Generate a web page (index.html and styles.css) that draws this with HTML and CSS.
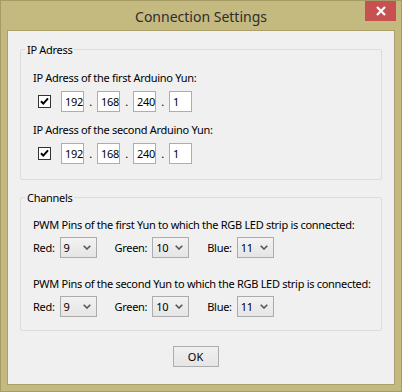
FILE: index.html
```html
<!DOCTYPE html>
<html lang="en">
<head>
  <meta charset="UTF-8">
  <meta name="viewport" content="width=device-width, initial-scale=1.0">
  <title>Connection Settings</title>
  <link rel="stylesheet" href="styles.css">
</head>
<body>
  <div class="window">
    <div class="titlebar">
      <span class="title">Connection Settings</span>
      <button class="close" aria-label="Close">
        <svg width="10" height="10" viewBox="0 0 10 10">
          <path d="M1 1L9 9M9 1L1 9" stroke="#fff" stroke-width="2.2" />
        </svg>
      </button>
    </div>

    <div class="content">
      <fieldset class="group group-ip">
        <legend>IP Adress</legend>

        <div class="field-label first">IP Adress of the first Arduino Yun:</div>
        <div class="ip-row">
          <span class="checkbox">
            <svg width="13" height="13" viewBox="0 0 13 13">
              <rect x="0.5" y="0.5" width="12" height="12" fill="#fff" stroke="#333" />
              <path d="M3 6.2L5.3 8.6L10 3.4" fill="none" stroke="#000" stroke-width="2" />
            </svg>
          </span>
          <span class="octet">192</span><span class="dot">.</span>
          <span class="octet">168</span><span class="dot">.</span>
          <span class="octet">240</span><span class="dot">.</span>
          <span class="octet">1</span>
        </div>

        <div class="field-label">IP Adress of the second Arduino Yun:</div>
        <div class="ip-row">
          <span class="checkbox">
            <svg width="13" height="13" viewBox="0 0 13 13">
              <rect x="0.5" y="0.5" width="12" height="12" fill="#fff" stroke="#333" />
              <path d="M3 6.2L5.3 8.6L10 3.4" fill="none" stroke="#000" stroke-width="2" />
            </svg>
          </span>
          <span class="octet">192</span><span class="dot">.</span>
          <span class="octet">168</span><span class="dot">.</span>
          <span class="octet">240</span><span class="dot">.</span>
          <span class="octet">1</span>
        </div>
      </fieldset>

      <fieldset class="group group-channels">
        <legend>Channels</legend>

        <div class="field-label first">PWM Pins of the first Yun to which the RGB LED strip is connected:</div>
        <div class="pin-row">
          <span class="pin-label">Red:</span>
          <span class="combo"><span>9</span><svg width="8" height="5" viewBox="0 0 8 5"><path d="M0.7 0.7L4 4L7.3 0.7" fill="none" stroke="#555" stroke-width="1.6" /></svg></span>
          <span class="pin-label">Green:</span>
          <span class="combo"><span>10</span><svg width="8" height="5" viewBox="0 0 8 5"><path d="M0.7 0.7L4 4L7.3 0.7" fill="none" stroke="#555" stroke-width="1.6" /></svg></span>
          <span class="pin-label">Blue:</span>
          <span class="combo"><span>11</span><svg width="8" height="5" viewBox="0 0 8 5"><path d="M0.7 0.7L4 4L7.3 0.7" fill="none" stroke="#555" stroke-width="1.6" /></svg></span>
        </div>

        <div class="field-label second">PWM Pins of the second Yun to which the RGB LED strip is connected:</div>
        <div class="pin-row">
          <span class="pin-label">Red:</span>
          <span class="combo"><span>9</span><svg width="8" height="5" viewBox="0 0 8 5"><path d="M0.7 0.7L4 4L7.3 0.7" fill="none" stroke="#555" stroke-width="1.6" /></svg></span>
          <span class="pin-label">Green:</span>
          <span class="combo"><span>10</span><svg width="8" height="5" viewBox="0 0 8 5"><path d="M0.7 0.7L4 4L7.3 0.7" fill="none" stroke="#555" stroke-width="1.6" /></svg></span>
          <span class="pin-label">Blue:</span>
          <span class="combo"><span>11</span><svg width="8" height="5" viewBox="0 0 8 5"><path d="M0.7 0.7L4 4L7.3 0.7" fill="none" stroke="#555" stroke-width="1.6" /></svg></span>
        </div>
      </fieldset>

      <div class="actions">
        <button class="ok">OK</button>
      </div>
    </div>
  </div>
</body>
</html>
```

FILE: styles.css
```css
/* Base */
body, html {
  margin: 0;
  padding: 0;
  font-family: "Noto Sans", "Open Sans", Arial, sans-serif;
  font-size: 11px;
  color: #000;
}

/* Window frame */
.window {
  width: 400px;
  height: 390px;
  background-color: #c4b97f;
  border: 1px solid #a59b66;
  display: flex;
  flex-direction: column;
}

.titlebar {
  height: 29px;
  position: relative;
  display: flex;
  align-items: center;
  justify-content: center;
}

.title {
  font-size: 14px;
  color: #2e2e2e;
  margin-top: 2px;
}

.close {
  position: absolute;
  top: 0;
  right: 5px;
  width: 31px;
  height: 20px;
  padding: 0;
  border: none;
  background-color: #c75050;
  display: flex;
  align-items: center;
  justify-content: center;
}

/* Client area */
.content {
  flex: 1;
  margin: 0 6px 6px;
  background-color: #f0f0f0;
  border: 1px solid #aaa06b;
  padding: 11px 12px 0;
  letter-spacing: -0.3px;
}

/* Group boxes */
.group {
  margin: 0;
  border: 1px solid #dcdcdc;
  border-radius: 2px;
  padding: 0 4px 15px;
}

.group legend {
  padding: 0 2px;
  line-height: 15px;
}

.group-channels {
  margin-top: 10px;
  padding-bottom: 13px;
}

.field-label {
  line-height: 15px;
  white-space: nowrap;
  margin: 10px 0 6px 8px;
}

.field-label.first {
  margin-top: 13px;
}

.group-channels .field-label {
  margin-bottom: 5px;
}

.group-channels .field-label.first {
  margin-top: 12px;
}

.group-channels .field-label.second {
  margin-top: 18px;
}

/* IP rows */
.ip-row {
  display: flex;
  align-items: center;
  height: 21px;
  margin-left: 13px;
}

.checkbox {
  display: flex;
  width: 13px;
  height: 13px;
  margin-right: 10px;
}

.octet {
  box-sizing: border-box;
  width: 23px;
  height: 21px;
  border: 1px solid #abadb3;
  background-color: #fff;
  padding: 0 3px;
  line-height: 19px;
}

.dot {
  width: 13px;
  text-align: center;
  line-height: 19px;
}

/* Pin rows */
.pin-row {
  display: flex;
  align-items: center;
  height: 21px;
  margin-left: 8px;
}

.pin-label {
  margin-right: 5px;
  margin-left: 18px;
}

.pin-label:first-child {
  margin-left: 0;
}

.combo {
  box-sizing: border-box;
  width: 37px;
  height: 21px;
  border: 1px solid #acacac;
  background: linear-gradient(#f2f2f2, #e5e5e5);
  display: flex;
  align-items: center;
  justify-content: space-between;
  padding: 0 5px 0 3px;
}

/* Footer */
.actions {
  display: flex;
  justify-content: center;
  padding-right: 11px;
  margin-top: 15px;
}

.ok {
  width: 46px;
  height: 21px;
  padding: 0;
  border: 1px solid #adadad;
  background: linear-gradient(#f0f0f0, #e5e5e5);
  font-family: "Noto Sans", "Open Sans", Arial, sans-serif;
  font-size: 11px;
  color: #000;
}
```
